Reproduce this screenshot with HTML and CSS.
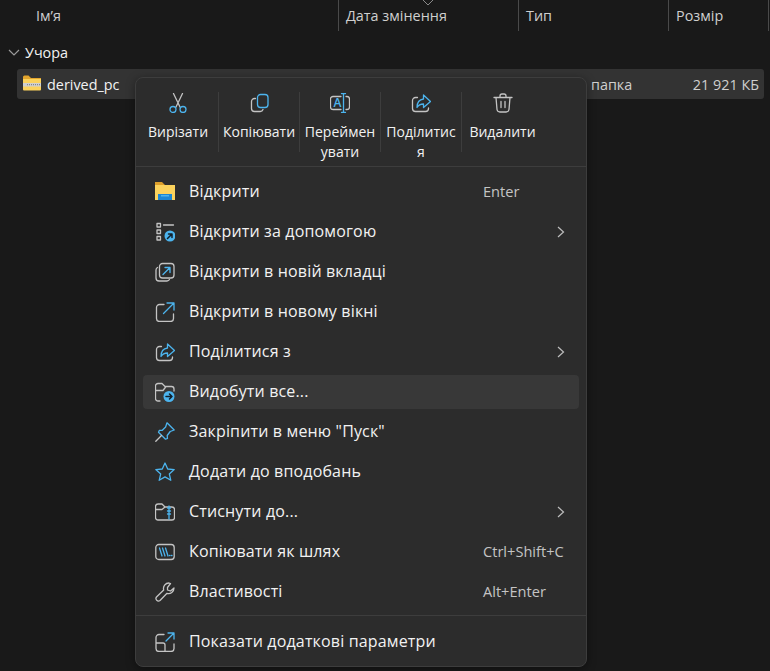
FILE: index.html
```html
<!DOCTYPE html>
<html lang="uk">
<head>
    <meta charset="UTF-8">
    <title>Провідник</title>
    <link rel="stylesheet" href="styles.css">
</head>
<body>
    <div class="header">
        <svg class="sort" viewBox="0 0 12 6"><path d="M1 0l5 5 5-5"/></svg>
        <div class="col col-name">Ім’я</div>
        <div class="col col-date">Дата змінення</div>
        <div class="col col-type">Тип</div>
        <div class="col col-size">Розмір</div>
    </div>
    <div class="group">
        <svg class="group-arrow" viewBox="0 0 12 7"><path d="M1 1l5 5 5-5"/></svg>
        <span>Учора</span>
    </div>
    <div class="file">
        <svg class="file-icon" viewBox="0 0 18 16">
            <path fill="#e3a52e" d="M0 2a1.500 1.500 0 0 1 1.500-1.500h4L8 3h10v2H0z"/>
            <path fill="#fbd25c" d="M0 4h18v10.500a1 1 0 0 1-1 1H1a1 1 0 0 1-1-1z"/>
            <rect fill="#cfcfcf" y="8" width="18" height="3.500"/>
            <path stroke="#777" stroke-dasharray="1 1" d="M4 9.700h14"/>
        </svg>
        <span class="file-name">derived_pc</span>
        <span class="file-type">папка</span>
        <span class="file-size">21 921 КБ</span>
    </div>

    <div class="menu">
        <div class="toolbar">
            <div class="tool">
                <svg class="icon" viewBox="0 0 20 20">
                    <path class="g" d="M5.500.5l6.500 13.500M14.500.5L8 14"/>
                    <circle class="b" cx="5" cy="16.500" r="3"/><circle class="b" cx="15" cy="16.500" r="3"/>
                </svg>
                <div class="tool-label">Вирізати</div>
            </div>
            <div class="tool">
                <svg class="icon" viewBox="0 0 20 20">
                    <rect class="b" x="8.500" y="1.500" width="10.500" height="13" rx="3"/>
                    <path class="g" d="M6.500 5.500H5.500a3 3 0 0 0-3 3v7a3 3 0 0 0 3 3h5.500a3 3 0 0 0 3-2"/>
                </svg>
                <div class="tool-label">Копіювати</div>
            </div>
            <div class="tool">
                <svg class="icon" viewBox="0 0 20 20">
                    <path class="g" d="M11 3.500H3a2.500 2.500 0 0 0-2.500 2.500v8A2.500 2.500 0 0 0 3 16.500h8M16 3.500h1a2.500 2.500 0 0 1 2.500 2.500v8a2.500 2.500 0 0 1-2.500 2.500h-1"/>
                    <text class="svg-a" x="3.500" y="14">A</text>
                    <path class="b" d="M13.500.5v19M11.500.5h4M11.500 19.500h4"/>
                </svg>
                <div class="tool-label">Переймен<br>увати</div>
            </div>
            <div class="tool">
                <svg class="icon" viewBox="0 0 20 20">
                    <path class="g" d="M6.500 4.500H4.500a3 3 0 0 0-3 3v8a3 3 0 0 0 3 3h10a3 3 0 0 0 3-3v-.500"/>
                    <path class="b" d="M12.500 2l7 6.500-7 6V11c-3 0-5 1-6.500 3.500 0-5 2.500-8 6.500-8.500z"/>
                </svg>
                <div class="tool-label">Поділитис<br>я</div>
            </div>
            <div class="tool tool-last">
                <svg class="icon" viewBox="0 0 20 20">
                    <path class="g" d="M1 4.500h18M7 4.500V3a2 2 0 0 1 2-2h2a2 2 0 0 1 2 2v1.500M3 4.500l1 12a3 3 0 0 0 3 2.500h6a3 3 0 0 0 3-2.500l1-12M8 8.500v6M12 8.500v6"/>
                </svg>
                <div class="tool-label">Видалити</div>
            </div>
        </div>

        <div class="list">
            <div class="row">
                <svg class="icon" viewBox="0 0 20 20">
                    <path fill="#dd9f2b" d="M0 0h7l3 3h10v3H0z"/>
                    <path fill="#fbd25c" d="M0 3h20v15H0z"/>
                    <path fill="#1b86d4" d="M3 12h14v6H3z"/>
                    <path fill="#4cb4ee" d="M6 13h8v1.500H6z"/>
                </svg>
                <span class="row-text">Відкрити</span>
                <span class="key">Enter</span>
            </div>
            <div class="row">
                <svg class="icon" viewBox="0 0 20 20">
                    <path class="g" d="M2 1.500h3.500V5H2zM2 8h3.500v3.500H2zM2 14.500h3.500V18H2zM8.500 3h10"/>
                    <circle cx="15" cy="14" r="5.500" fill="#4cb4ee"/>
                    <path class="d" d="M12.500 16.500l4.500-4.500M13.500 12H17v3.500"/>
                </svg>
                <span class="row-text">Відкрити за допомогою</span>
                <svg class="more" viewBox="0 0 8 12"><path d="M1 1l5.500 5L1 11"/></svg>
            </div>
            <div class="row">
                <svg class="icon" viewBox="0 0 20 20">
                    <rect class="g" x="4.500" y="1.500" width="14.500" height="14.500" rx="3"/>
                    <path class="g" d="M2.500 5.500A3 3 0 0 0 1 8v8a3 3 0 0 0 3 3h8a3 3 0 0 0 2.500-1.500"/>
                    <path class="b" d="M8 12.500l7-7M10 5.500h5v5"/>
                </svg>
                <span class="row-text">Відкрити в новій вкладці</span>
            </div>
            <div class="row">
                <svg class="icon" viewBox="0 0 20 20">
                    <path class="g" d="M9 2.500H4.500a3 3 0 0 0-3 3v11a3 3 0 0 0 3 3h11a3 3 0 0 0 3-3V12"/>
                    <path class="b" d="M8.500 11.500L18.500 1.500M12 1h7v7"/>
                </svg>
                <span class="row-text">Відкрити в новому вікні</span>
            </div>
            <div class="row">
                <svg class="icon" viewBox="0 0 20 20">
                    <path class="g" d="M6.500 4.500H4.500a3 3 0 0 0-3 3v8a3 3 0 0 0 3 3h10a3 3 0 0 0 3-3v-.500"/>
                    <path class="b" d="M12.500 2l7 6.500-7 6V11c-3 0-5 1-6.500 3.500 0-5 2.500-8 6.500-8.500z"/>
                </svg>
                <span class="row-text">Поділитися з</span>
                <svg class="more" viewBox="0 0 8 12"><path d="M1 1l5.500 5L1 11"/></svg>
            </div>
            <div class="row row-hover">
                <svg class="icon" viewBox="0 0 20 20">
                    <path class="g" d="M5 19H3a2.500 2.500 0 0 1-2.500-2.500V4A2.500 2.500 0 0 1 3 1.500h4l3 3h6.500A2.500 2.500 0 0 1 19 7v2M1 8.500h7l3-4"/>
                    <circle cx="14" cy="14.500" r="5.500" fill="#4cb4ee"/>
                    <path class="d" d="M11 14.500h6M14.500 12l2.500 2.500-2.500 2.500"/>
                </svg>
                <span class="row-text">Видобути все...</span>
            </div>
            <div class="row">
                <svg class="icon" viewBox="0 0 20 20">
                    <path class="b" d="M12 .800l7.200 7.200-4 1.500-3 4 .3 3-2 .7L3.500 10.200l.8-1.800 3-.1 3.300-3.300z"/>
                    <path class="g" d="M6.500 13.500L.8 19.200"/>
                </svg>
                <span class="row-text">Закріпити в меню "Пуск"</span>
            </div>
            <div class="row">
                <svg class="icon" viewBox="0 0 20 20">
                    <path class="b" d="M10 1l2.700 6 6.500.6-4.900 4.300 1.500 6.400-5.800-3.400-5.800 3.400 1.500-6.400L.8 7.600 7.300 7z"/>
                </svg>
                <span class="row-text">Додати до вподобань</span>
            </div>
            <div class="row">
                <svg class="icon" viewBox="0 0 20 20">
                    <path class="g" d="M3 2h4l3 3h7a2.500 2.500 0 0 1 2.500 2.500v8A2.500 2.500 0 0 1 17 18H3a2.500 2.500 0 0 1-2.500-2.500v-11A2.500 2.500 0 0 1 3 2zM1 7.500h6L10 5"/>
                    <path class="b" d="M14 4v13M12.500 6h3M12.500 9h3M12.500 12h3"/>
                </svg>
                <span class="row-text">Стиснути до...</span>
                <svg class="more" viewBox="0 0 8 12"><path d="M1 1l5.500 5L1 11"/></svg>
            </div>
            <div class="row">
                <svg class="icon" viewBox="0 0 20 20">
                    <rect class="g" x=".800" y="2.500" width="18.400" height="15" rx="3"/>
                    <path class="b" d="M4.500 6l2.500 8M7.500 6l2.500 8M10.500 6l2.500 8M14.500 13.500h.5M16.500 13.500h.5"/>
                </svg>
                <span class="row-text">Копіювати як шлях</span>
                <span class="key">Ctrl+Shift+C</span>
            </div>
            <div class="row">
                <svg class="icon" viewBox="0 0 20 20">
                    <path class="g" d="M14 1a5.500 5.500 0 0 0-5.300 7L1.500 15a2.500 2.500 0 0 0 3.500 3.500l7-7.200A5.500 5.500 0 0 0 19 6l-3.500 3-3-1V5.500L15.500 1.500z"/>
                </svg>
                <span class="row-text">Властивості</span>
                <span class="key">Alt+Enter</span>
            </div>
        </div>

        <div class="row row-last">
            <svg class="icon" viewBox="0 0 20 20">
                <path class="g" d="M9 2.500H4a3 3 0 0 0-3 3v11a3 3 0 0 0 3 3h12a3 3 0 0 0 3-3V12M1 11h7a2 2 0 0 1 2 2v6.500"/>
                <path class="b" d="M11 9l8-8M13 1h6v6"/>
            </svg>
            <span class="row-text">Показати додаткові параметри</span>
        </div>
    </div>
</body>
</html>
```

FILE: styles.css
```css
*{
    margin: 0;
    padding: 0;
    box-sizing: border-box;
}
body{
    width: 770px;
    height: 671px;
    overflow: hidden;
    position: relative;
    background: #191919;
    color: #f2f2f2;
    font-family: "Open Sans", "Noto Sans", sans-serif;
    font-size: 14.4px;
}
svg{
    display: block;
    flex: none;
}

/* шапка таблиці */
.header{
    display: flex;
    height: 31px;
    color: #cfcfcf;
}
.col{
    height: 31px;
    line-height: 32px;
    padding-left: 7px;
    border-right: 1px solid #4a4a4a;
}
.col-name{
    width: 339px;
    padding-left: 36px;
}
.col-date{
    width: 180px;
}
.col-type{
    width: 150px;
}
.col-size{
    width: 100px;
}
.sort{
    position: absolute;
    left: 422px;
    top: 0;
    width: 12px;
    height: 6px;
    fill: none;
    stroke: #8a8a8a;
}

/* група */
.group{
    display: flex;
    align-items: center;
    height: 38px;
    padding: 4px 0 0 8px;
    gap: 5px;
}
.group-arrow{
    width: 12px;
    height: 7px;
    fill: none;
    stroke: #9a9a9a;
    stroke-width: 1.2;
}

/* рядок файлу */
.file{
    display: flex;
    align-items: center;
    width: 747px;
    height: 30px;
    margin-left: 17px;
    padding: 0 5px 0 6px;
    background: #333333;
    border-radius: 3px;
}
.file-icon{
    width: 18px;
    height: 16px;
    margin-top: -2px;
}
.file-name{
    margin-left: 6px;
}
.file-type{
    position: absolute;
    left: 591px;
    color: #cfcfcf;
}
.file-size{
    margin-left: auto;
    color: #cfcfcf;
}

/* контекстне меню */
.menu{
    position: absolute;
    left: 135px;
    top: 77px;
    width: 452px;
    height: 590px;
    background: #2c2c2c;
    border: 1px solid #3d3d3d;
    border-radius: 8px;
    box-shadow: 0 2px 10px rgba(0,0,0,.4);
}
.toolbar{
    display: flex;
    height: 89px;
    padding: 14px 0 0 2px;
    border-bottom: 1px solid #3d3d3d;
}
.tool{
    display: flex;
    flex-direction: column;
    align-items: center;
    width: 81px;
    height: 60px;
    padding-top: 1px;
    border-right: 1px solid #3d3d3d;
}
.tool-last{
    border-right: 0;
}
.tool-label{
    margin-top: 9px;
    line-height: 20px;
    font-size: 14px;
    text-align: center;
    white-space: nowrap;
}
.icon{
    width: 20px;
    height: 20px;
}
.g, .b, .d{
    fill: none;
    stroke-width: 1.300;
    stroke-linecap: round;
    stroke-linejoin: round;
}
.g{
    stroke: #c4c4c4;
}
.b{
    stroke: #4cb4ee;
}
.d{
    stroke: #10202c;
    stroke-width: 1.500;
}
.svg-a{
    fill: #4cb4ee;
    font-size: 12px;
    font-weight: 600;
}

.list{
    display: flex;
    flex-direction: column;
    gap: 6px;
    padding: 8px 7px;
    height: 449px;
    border-bottom: 1px solid #3d3d3d;
}
.row{
    display: flex;
    align-items: center;
    height: 34px;
    flex: none;
    padding: 0 14px 0 12px;
    border-radius: 4px;
    position: relative;
}
.row-hover{
    background: #383838;
}
.row-last{
    margin: 9px 7px 0;
}
.row-text{
    margin-left: 14px;
    padding-bottom: 2px;
    font-size: 16px;
    letter-spacing: .16px;
}
.key{
    position: absolute;
    left: 340px;
    padding-bottom: 2px;
    color: #c4c4c4;
    font-size: 14.6px;
}
.more{
    margin-left: auto;
    width: 8px;
    height: 12px;
    fill: none;
    stroke: #bdbdbd;
    stroke-width: 1.200;
}
```
